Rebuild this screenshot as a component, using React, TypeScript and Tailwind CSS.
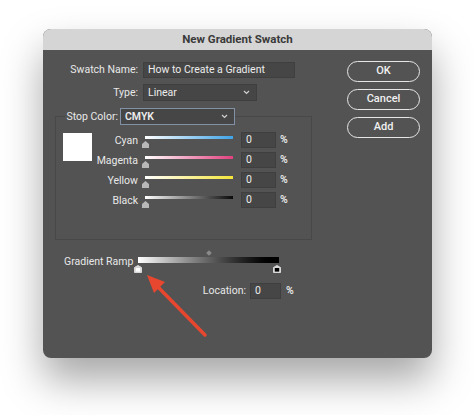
import { ReactNode } from 'react';

// 滑块颜色
const INKS = [
  { name: 'Cyan', to: '#3fa3e6' },
  { name: 'Magenta', to: '#e2407f' },
  { name: 'Yellow', to: '#f4e53a' },
  { name: 'Black', to: '#0a0a0a' },
];

const FONT = { fontFamily: 'Roboto, "Liberation Sans", sans-serif' };

function Field({ w, h = 16, children, focus }: { w: number; h?: number; children?: ReactNode; focus?: boolean }) {
  return (
    <div
      className={`flex items-center px-[4px] text-[10.5px] text-[#ececec] bg-[#464646] border whitespace-nowrap ${
        focus ? 'border-[#8391a6]' : 'border-[#3f3f3f]'
      }`}
      style={{ width: w, height: h }}
    >
      {children}
    </div>
  );
}

function Select({ w, label, focus }: { w: number; label: string; focus?: boolean }) {
  return (
    <Field w={w} h={17} focus={focus}>
      <span className={focus ? 'font-semibold' : ''}>{label}</span>
      <svg className="ml-auto mr-[2px]" width="7" height="5" viewBox="0 0 7 5">
        <path d="M1 1 L3.5 3.5 L6 1" stroke="#cfcfcf" strokeWidth="1.2" fill="none" />
      </svg>
    </Field>
  );
}

function Thumb() {
  return (
    <svg width="7" height="7" viewBox="0 0 7 7">
      <path d="M0 3 L3.5 0 L7 3 L7 7 L0 7 Z" fill="#b8b8b8" />
    </svg>
  );
}

function RampStop({ fill }: { fill: string }) {
  return (
    <svg width="8" height="8" viewBox="0 0 8 8">
      <path d="M0.5 2.5 L4 0.5 L7.5 2.5 L7.5 7.5 L0.5 7.5 Z" fill="#d8d8d8" stroke="#d8d8d8" />
      <rect x="1.8" y="3" width="4.4" height="3.6" fill={fill} />
    </svg>
  );
}

function Button({ children }: { children: ReactNode }) {
  return (
    <div className="w-[73px] h-[21px] rounded-full border-[1.5px] border-[#e6e6e6] flex items-center justify-center text-[11px] font-medium text-[#f0f0f0]">
      {children}
    </div>
  );
}

export default function App() {
  return (
    <div className="w-[474px] h-[415px] bg-white overflow-hidden" style={FONT}>
      <div className="ml-[43px] mt-[29px] w-[389px] h-[329px] rounded-[8px] overflow-hidden bg-[#535353] shadow-[0_22px_40px_rgba(0,0,0,0.35)] flex flex-col">
        {/* 标题栏 */}
        <div className="h-[21px] bg-[#d5d5d5] flex items-center justify-center text-[11.5px] font-bold text-[#3a3a3a]">
          New Gradient Swatch
        </div>

        {/* 内容 */}
        <div className="relative flex-1 flex pl-[12px] pt-[12px] text-[10.5px] text-[#e8e8e8] whitespace-nowrap">
          <div className="w-[257px] flex flex-col">
            <div className="flex items-center h-[16px]">
              <div className="w-[84px] text-right pr-[1px]">Swatch Name:</div>
              <div className="ml-[4px]">
                <Field w={152}>How to Create a Gradient</Field>
              </div>
            </div>
            <div className="flex items-center h-[17px] mt-[6px]">
              <div className="w-[84px] text-right pr-[1px]">Type:</div>
              <div className="ml-[4px]">
                <Select w={114} label="Linear" />
              </div>
            </div>

            {/* 颜色面板 */}
            <fieldset className="mt-[7px] border border-[#484848] h-[132px] px-[7px]">
              <legend className="ml-[2px] flex items-center h-[17px]">
                <span className="w-[53px] text-right">Stop Color:</span>
                <span className="ml-[2px]">
                  <Select w={115} label="CMYK" focus />
                </span>
              </legend>
              <div className="flex mt-[7px]">
                <div className="w-[29px] h-[28px] bg-white mt-[1px]" />
                <div className="flex flex-col gap-[4px]">
                  {INKS.map((ink) => (
                    <div key={ink.name} className="flex items-center h-[16px]">
                      <div className="w-[46px] text-right pt-[2px]">{ink.name}</div>
                      <div className="relative ml-[7px] w-[88px] h-[16px]">
                        <div
                          className="absolute left-0 right-0 top-[4px] h-[3px]"
                          style={{ background: `linear-gradient(to right, #ffffff, ${ink.to})` }}
                        />
                        <div className="absolute left-[-3px] top-[9px] flex">
                          <Thumb />
                        </div>
                      </div>
                      <div className="ml-[8px]">
                        <Field w={35}>0</Field>
                      </div>
                      <span className="ml-[4px] font-semibold">%</span>
                    </div>
                  ))}
                </div>
              </div>
            </fieldset>

            {/* 渐变条 */}
            <div className="flex mt-[10px]">
              <div className="w-[79px] pl-[9px] pt-[4px]">Gradient Ramp</div>
              <div className="w-[149px] flex flex-col">
                <div className="h-[7px] flex justify-center">
                  <div className="w-[4px] h-[4px] rotate-45 bg-[#8a8a8a] mt-[1px]" />
                </div>
                <div className="h-[6px] bg-gradient-to-r from-white to-black mx-[4px]" />
                <div className="flex justify-between mt-[2px] mr-[2px]">
                  <RampStop fill="#ffffff" />
                  <RampStop fill="#000000" />
                </div>
              </div>
            </div>

            <div className="flex items-center mt-[10px] h-[16px]">
              <div className="w-[191px] text-right">Location:</div>
              <div className="ml-[4px]">
                <Field w={31}>0</Field>
              </div>
              <span className="ml-[5px] font-semibold">%</span>
            </div>
          </div>

          {/* 按钮 */}
          <div className="ml-[35px] mt-[-1px] flex flex-col gap-[7px]">
            <Button>OK</Button>
            <Button>Cancel</Button>
            <Button>Add</Button>
          </div>

          {/* 红色箭头标注 */}
          <svg className="absolute left-0 top-0 pointer-events-none" width="389" height="308" viewBox="0 0 389 308">
            <line x1="162" y1="285" x2="115" y2="237" stroke="#e8472f" strokeWidth="3.5" strokeLinecap="round" />
            <path d="M104 225 L122 232 L111 243 Z" fill="#e8472f" />
          </svg>
        </div>
      </div>
    </div>
  );
}
